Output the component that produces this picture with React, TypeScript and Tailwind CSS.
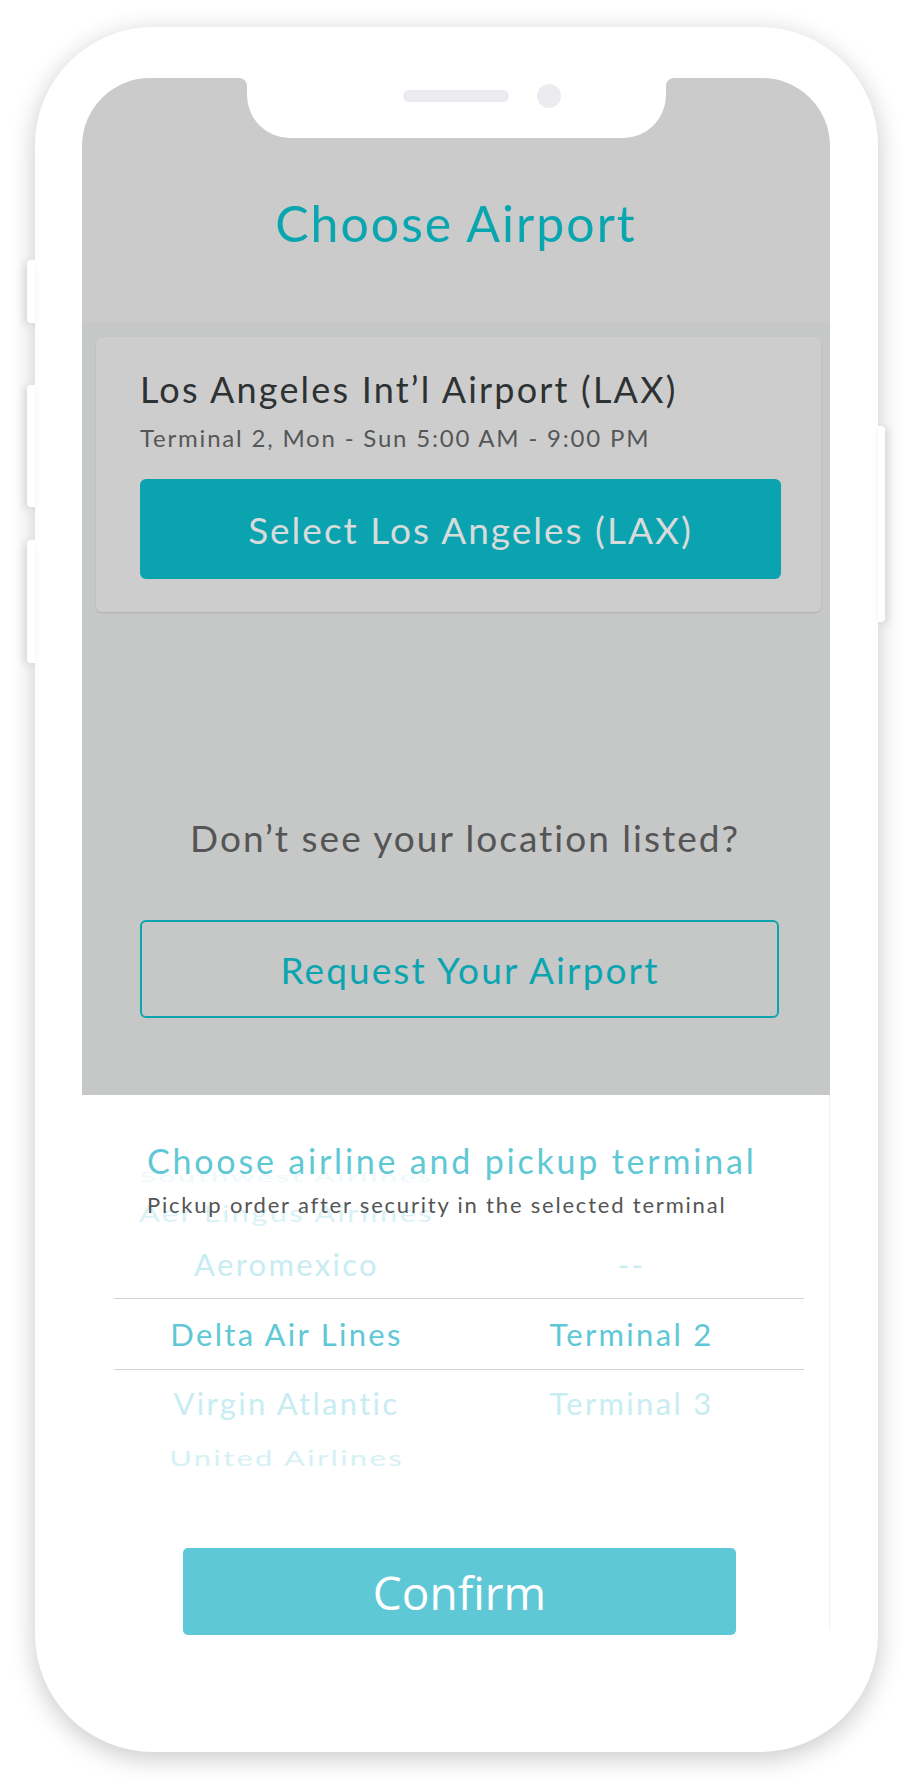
import React from 'react';

type PickerRow = {
  airline: string;
  terminal?: string;
  rowClass: string;
  textClass: string;
};

const pickerRows: PickerRow[] = [
  { airline: 'Southwest Airlines', rowClass: 'h-[36px]', textClass: 'text-[#eef9fb] scale-y-[0.4]' },
  { airline: 'Aer Lingus Airlines', rowClass: 'h-[36px]', textClass: 'text-[#d9f2f6] scale-y-[0.75]' },
  { airline: 'Aeromexico', terminal: '--', rowClass: 'h-[67px]', textClass: 'text-[#c7edf2]' },
  {
    airline: 'Delta Air Lines',
    terminal: 'Terminal 2',
    rowClass: 'h-[72px] border-y-[1.5px] border-[#d2d2d2]',
    textClass: 'text-[#5ec8d6]',
  },
  { airline: 'Virgin Atlantic', terminal: 'Terminal 3', rowClass: 'h-[67px]', textClass: 'text-[#c7edf2]' },
  { airline: 'United Airlines', rowClass: 'h-[40px]', textClass: 'text-[#d6f1f5] scale-y-[0.7]' },
];

function Notch() {
  return (
    <svg
      className="absolute top-0 left-[157px] z-20"
      width="435"
      height="60"
      viewBox="0 0 435 60"
    >
      <path
        d="M0 0 H435 A8 8 0 0 0 427 8 V17 A43 43 0 0 1 384 60 H51 A43 43 0 0 1 8 17 V8 A8 8 0 0 0 0 0 Z"
        fill="#ffffff"
      />
      <rect x="164" y="12" width="106" height="12" rx="6" fill="#ececf0" />
      <circle cx="310" cy="18" r="12" fill="#ececf0" />
    </svg>
  );
}

export default function App() {
  return (
    <div className="w-[913px] h-[1780px] bg-white pt-[27px] pl-[35px] font-['Lato',sans-serif] overflow-hidden">
      {/* Phone body */}
      <div className="relative w-[843px] h-[1725px] rounded-[118px] bg-white shadow-[0_6px_26px_rgba(0,0,0,0.22)] pt-[51px] pl-[47px]">
        {/* Side buttons */}
        <div className="absolute left-[-8px] top-[233px] w-[8px] h-[63px] rounded-l-[4px] bg-white shadow-[-3px_2px_8px_rgba(0,0,0,0.12)]" />
        <div className="absolute left-[-8px] top-[358px] w-[8px] h-[122px] rounded-l-[4px] bg-white shadow-[-3px_2px_8px_rgba(0,0,0,0.12)]" />
        <div className="absolute left-[-8px] top-[513px] w-[8px] h-[123px] rounded-l-[4px] bg-white shadow-[-3px_2px_8px_rgba(0,0,0,0.12)]" />
        <div className="absolute right-[-7px] top-[399px] w-[7px] h-[196px] rounded-r-[4px] bg-white shadow-[3px_2px_8px_rgba(0,0,0,0.12)]" />

        {/* Screen */}
        <div className="relative w-[748px]">
          <Notch />

          {/* Dimmed airport list */}
          <div className="h-[1017px] rounded-t-[68px] bg-[#cbcbcb] flex flex-col overflow-hidden">
            <div className="h-[245px] shrink-0 pt-[120px]">
              <h1 className="text-center text-[50px] leading-[50px] tracking-[2px] text-[#0aa6b0]">Choose Airport</h1>
            </div>

            <div className="flex-1 bg-[#c6c7c7] pt-[14px]">
              <div className="ml-[14px] w-[725px] h-[275px] rounded-[6px] bg-[#cdcdcd] shadow-[0_1px_2px_rgba(0,0,0,0.12)] pt-[34px] pl-[44px] pr-[40px]">
                <div className="text-[36px] leading-[36px] tracking-[2.2px] text-[#2e3232] whitespace-nowrap">
                  Los Angeles Int’l Airport (LAX)
                </div>
                <div className="mt-[19px] text-[24px] leading-[24px] tracking-[1.8px] text-[#555757] whitespace-nowrap">
                  Terminal 2, Mon - Sun 5:00 AM - 9:00 PM
                </div>
                <button
                  type="button"
                  className="mt-[29px] w-full h-[100px] rounded-[6px] bg-[#0ca3b0] flex items-center justify-center pl-[20px] text-[37px] leading-[37px] tracking-[2px] text-[#d8dbdb]"
                >
                  Select Los Angeles (LAX)
                </button>
              </div>

              <p className="mt-[207px] pl-[18px] text-center text-[37px] leading-[37px] tracking-[2px] text-[#555555]">
                Don’t see your location listed?
              </p>

              <button
                type="button"
                className="mt-[64px] ml-[58px] w-[639px] h-[98px] rounded-[6px] border-[2.5px] border-[#0aa5b1] flex items-center justify-center pl-[21px] text-[37px] leading-[37px] tracking-[2.1px] text-[#0aa5b1]"
              >
                Request Your Airport
              </button>
            </div>
          </div>

          {/* Bottom sheet */}
          <div className="h-[535px] bg-white border-r border-[#f1f1f1] pt-[49px]">
            <div className="relative z-10 pl-[65px]">
              <h2 className="text-[34px] leading-[34px] tracking-[2.8px] text-[#5fc8d5] whitespace-nowrap">
                Choose airline and pickup terminal
              </h2>
              <p className="mt-[16px] text-[22px] leading-[22px] tracking-[1.8px] text-[#555555] whitespace-nowrap">
                Pickup order after security in the selected terminal
              </p>
            </div>

            <div className="mt-[-57px] ml-[32px] w-[690px] flex flex-col">
              {pickerRows.map((row) => (
                <div key={row.airline} className={`grid grid-cols-2 items-center ${row.rowClass}`}>
                  <div className={`text-center text-[31px] leading-[31px] tracking-[2.3px] ${row.textClass}`}>
                    {row.airline}
                  </div>
                  <div className={`text-center text-[31px] leading-[31px] tracking-[2.3px] ${row.textClass}`}>
                    {row.terminal}
                  </div>
                </div>
              ))}
            </div>

            <button
              type="button"
              className="mt-[71px] ml-[101px] w-[553px] h-[87px] rounded-[5px] bg-[#5ec8d6] flex items-center justify-center font-['Open_Sans',sans-serif] text-[46px] leading-[46px] text-white"
            >
              Confirm
            </button>
          </div>
        </div>
      </div>
    </div>
  );
}
